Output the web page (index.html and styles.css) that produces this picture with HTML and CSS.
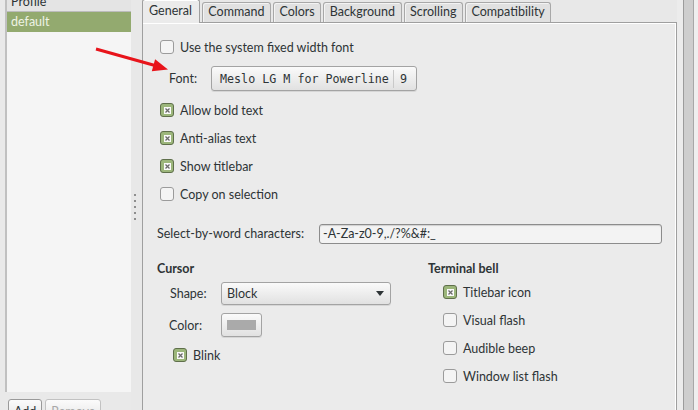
FILE: index.html
```html
<!DOCTYPE html>
<html>
<head>
<meta charset="utf-8">
<link rel="stylesheet" href="styles.css">
</head>
<body>
<div class="window">
  <div class="sidebar">
    <div class="list">
      <div class="list-head">Profile</div>
      <div class="list-row selected">default</div>
    </div>
    <div class="list-buttons">
      <button class="btn">Add</button>
      <button class="btn" disabled>Remove</button>
    </div>
  </div>
  <div class="handle">
    <span class="dot"></span><span class="dot"></span><span class="dot"></span><span class="dot"></span><span class="dot"></span>
  </div>
  <div class="main">
    <div class="tabs">
      <div class="tab active">General</div>
      <div class="tab">Command</div>
      <div class="tab">Colors</div>
      <div class="tab">Background</div>
      <div class="tab">Scrolling</div>
      <div class="tab">Compatibility</div>
    </div>
    <div class="page">
      <div class="check-row"><span class="cb"></span><span>Use the system fixed width font</span></div>
      <div class="font-row">
        <span class="field-label font-label">Font:</span>
        <div class="fontbtn"><span class="fontname">Meslo LG M for Powerline</span><span class="sep"></span><span class="fontsize">9</span></div>
      </div>
      <div class="check-row"><span class="cb on"><svg width="6" height="6" viewBox="0 0 6 6"><path d="M1 1L5 5M5 1L1 5" stroke="#6a6a6a" stroke-width="1.3"/></svg></span><span>Allow bold text</span></div>
      <div class="check-row"><span class="cb on"><svg width="6" height="6" viewBox="0 0 6 6"><path d="M1 1L5 5M5 1L1 5" stroke="#6a6a6a" stroke-width="1.3"/></svg></span><span>Anti-alias text</span></div>
      <div class="check-row"><span class="cb on"><svg width="6" height="6" viewBox="0 0 6 6"><path d="M1 1L5 5M5 1L1 5" stroke="#6a6a6a" stroke-width="1.3"/></svg></span><span>Show titlebar</span></div>
      <div class="check-row"><span class="cb"></span><span>Copy on selection</span></div>
      <div class="word-row">
        <span class="word-label">Select-by-word characters:</span>
        <div class="entry">-A-Za-z0-9,./?%&amp;#:_</div>
      </div>
      <div class="columns">
        <div class="col">
          <div class="section-title">Cursor</div>
          <div class="field-row">
            <span class="field-label">Shape:</span>
            <div class="combo"><span>Block</span><span class="caret"></span></div>
          </div>
          <div class="field-row color-row">
            <span class="field-label">Color:</span>
            <div class="colorbtn"><span class="swatch"></span></div>
          </div>
          <div class="check-row blink"><span class="cb on"><svg width="6" height="6" viewBox="0 0 6 6"><path d="M1 1L5 5M5 1L1 5" stroke="#6a6a6a" stroke-width="1.3"/></svg></span><span>Blink</span></div>
        </div>
        <div class="col">
          <div class="section-title">Terminal bell</div>
          <div class="check-row bell"><span class="cb on"><svg width="6" height="6" viewBox="0 0 6 6"><path d="M1 1L5 5M5 1L1 5" stroke="#6a6a6a" stroke-width="1.3"/></svg></span><span>Titlebar icon</span></div>
          <div class="check-row bell"><span class="cb"></span><span>Visual flash</span></div>
          <div class="check-row bell"><span class="cb"></span><span>Audible beep</span></div>
          <div class="check-row bell"><span class="cb"></span><span>Window list flash</span></div>
        </div>
      </div>
    </div>
  </div>
  <div class="edge">
    <span class="edge-gap"></span><span class="edge-line"></span><span class="edge-bar"></span><span class="edge-line light"></span><span class="edge-rest"></span>
  </div>
  <svg class="arrow" width="698" height="410" viewBox="0 0 698 410">
    <line x1="96" y1="49" x2="155" y2="65.5" stroke="#e8141b" stroke-width="3"/>
    <polygon points="168,69.5 155.1,59.2 151.8,71.2" fill="#e8141b"/>
  </svg>
</div>
</body>
</html>
```
FILE: styles.css
```css
* { box-sizing: border-box; }

body {
  margin: 0;
  width: 698px;
  height: 410px;
  overflow: hidden;
  background: #e8e8e8;
  font-family: Lato, "Open Sans", sans-serif;
  font-size: 12.5px;
  color: #2e3436;
}

.window {
  position: relative;
  display: flex;
  height: 410px;
}

/* sidebar */
.sidebar {
  width: 131px;
  flex: none;
  padding-left: 5px;
  display: flex;
  flex-direction: column;
  background: #e9e9e9;
}

.list {
  flex: none;
  height: 400px;
  margin-top: -8px;
  background: #f5f5f5;
  border-left: 2px solid #c0c0c0;
}

.list-head {
  height: 20px;
  line-height: 19px;
  padding-left: 4px;
  background: #e4e4e4;
  border-bottom: 1px solid #bcbcbc;
}

.list-row {
  height: 20px;
  line-height: 20px;
  padding-left: 4px;
}

.list-row.selected {
  background: #93aa6f;
  color: #eef3e4;
}

.list-buttons {
  flex: none;
  display: flex;
  gap: 3px;
  padding: 7px 0 0 3px;
}

.btn {
  font: inherit;
  height: 24px;
  padding: 0 5px;
  border: 1px solid #999;
  border-radius: 3px;
  background: linear-gradient(#fbfbfb, #e3e3e3);
  color: #2e3436;
}

.btn:disabled {
  color: #a8a8a8;
  border-color: #c2c2c2;
}

/* pane handle */
.handle {
  width: 11px;
  flex: none;
  display: flex;
  flex-direction: column;
  align-items: flex-start;
  justify-content: center;
  gap: 4px;
  padding: 4px 0 0 3px;
}

.dot {
  width: 2px;
  height: 2px;
  background: #8e8e8e;
}

/* notebook */
.main {
  width: 535px;
  flex: none;
  display: flex;
  flex-direction: column;
}

.tabs {
  height: 22px;
  display: flex;
  align-items: flex-end;
}

.tab {
  height: 20px;
  line-height: 18px;
  padding: 0 5.5px;
  margin-left: 2px;
  border: 1px solid #a8a8a8;
  border-bottom: none;
  border-radius: 3px 3px 0 0;
  background: #e1e1e1;
  box-shadow: inset 1px 1px 0 #f3f3f3;
}

.tab.active {
  height: 24px;
  line-height: 22px;
  margin-left: 0;
  margin-bottom: -1px;
  padding: 0 7px 0 6px;
  background: #ebebeb;
  border-color: #9f9f9f;
  box-shadow: inset 0 1px 0 #fff;
  position: relative;
  z-index: 1;
}

.page {
  flex: 1;
  background: #ebebeb;
  border: 1px solid #9f9f9f;
  border-bottom: none;
  box-shadow: inset -1px 1px 0 #fff;
  padding: 10px 13px 0 14px;
}

.check-row {
  height: 28px;
  display: flex;
  align-items: center;
  gap: 6px;
  padding-left: 3px;
}

.cb {
  width: 14px;
  height: 14px;
  flex: none;
  border: 1px solid #9b9b9b;
  border-radius: 3px;
  background: #f4f4f4;
  display: flex;
  align-items: center;
  justify-content: center;
}

.cb.on {
  background: #9cb67b;
  border-color: #5f6f4b;
}

.cb.on svg {
  background: #fafafa;
  width: 7px;
  height: 7px;
  padding: 0.5px;
}

.font-row {
  height: 35px;
  display: flex;
  align-items: center;
  padding-left: 12px;
}

.field-label {
  width: 51px;
  flex: none;
}

.font-label {
  width: 42px;
}

.fontbtn {
  width: 206px;
  height: 25px;
  display: flex;
  align-items: center;
  padding-left: 8px;
  border: 1px solid #a3a3a3;
  border-radius: 3px;
  background: linear-gradient(#fafafa, #e1e1e1);
  box-shadow: 0 1px 0 #d6d6d6;
}

.fontname {
  width: 173px;
  flex: none;
  font-family: "DejaVu Sans Mono", monospace;
  font-size: 11.7px;
}

.sep {
  width: 1px;
  height: 18px;
  background: #c9c9c9;
}

.fontsize {
  padding-left: 6px;
  font-family: "DejaVu Sans Mono", monospace;
  font-size: 11.7px;
}

.word-row {
  margin-top: 15px;
  height: 21px;
  display: flex;
  align-items: center;
}

.word-label {
  width: 162px;
  flex: none;
}

.entry {
  width: 343px;
  height: 20px;
  line-height: 18px;
  padding-left: 3px;
  border: 1px solid #8c8c8c;
  border-radius: 3px;
  background: #f3f3f3;
  box-shadow: inset 0 1px 1px #d0d0d0;
}

.columns {
  display: grid;
  grid-template-columns: 271px 1fr;
  margin-top: 16px;
}

.section-title {
  height: 18px;
  line-height: 18px;
  font-weight: bold;
}

.field-row {
  height: 25px;
  margin-top: 3px;
  display: flex;
  align-items: center;
  padding-left: 13px;
}

.color-row {
  height: 26px;
  margin-top: 6px;
  padding-left: 12px;
}

.color-row .field-label {
  width: 52px;
}

.combo {
  width: 170px;
  height: 23px;
  display: flex;
  align-items: center;
  justify-content: space-between;
  padding: 0 6px 0 5px;
  border: 1px solid #a3a3a3;
  border-radius: 3px;
  background: linear-gradient(#fafafa, #e1e1e1);
  box-shadow: 0 1px 0 #d6d6d6;
}

.caret {
  width: 0;
  height: 0;
  border-left: 4.5px solid transparent;
  border-right: 4.5px solid transparent;
  border-top: 5px solid #2e3436;
}

.colorbtn {
  width: 41px;
  height: 24px;
  display: flex;
  align-items: center;
  justify-content: center;
  border: 1px solid #a3a3a3;
  border-radius: 3px;
  background: linear-gradient(#fafafa, #e1e1e1);
  box-shadow: 0 1px 0 #d6d6d6;
}

.swatch {
  width: 29px;
  height: 10px;
  background: #aaaaaa;
}

.check-row.blink {
  margin-top: 3px;
  padding-left: 16px;
}

.check-row.bell {
  padding-left: 15px;
}

/* right edge */
.edge {
  flex: 1;
  display: flex;
}

.edge-gap { width: 6px; background: #ececec; }
.edge-line { width: 1px; background: #9c9c9c; }
.edge-line.light { background: #a8a8a8; }
.edge-bar { width: 9px; background: #cecece; }
.edge-rest { flex: 1; background: #efefef; }

.arrow {
  position: absolute;
  left: 0;
  top: 0;
  pointer-events: none;
}
```
